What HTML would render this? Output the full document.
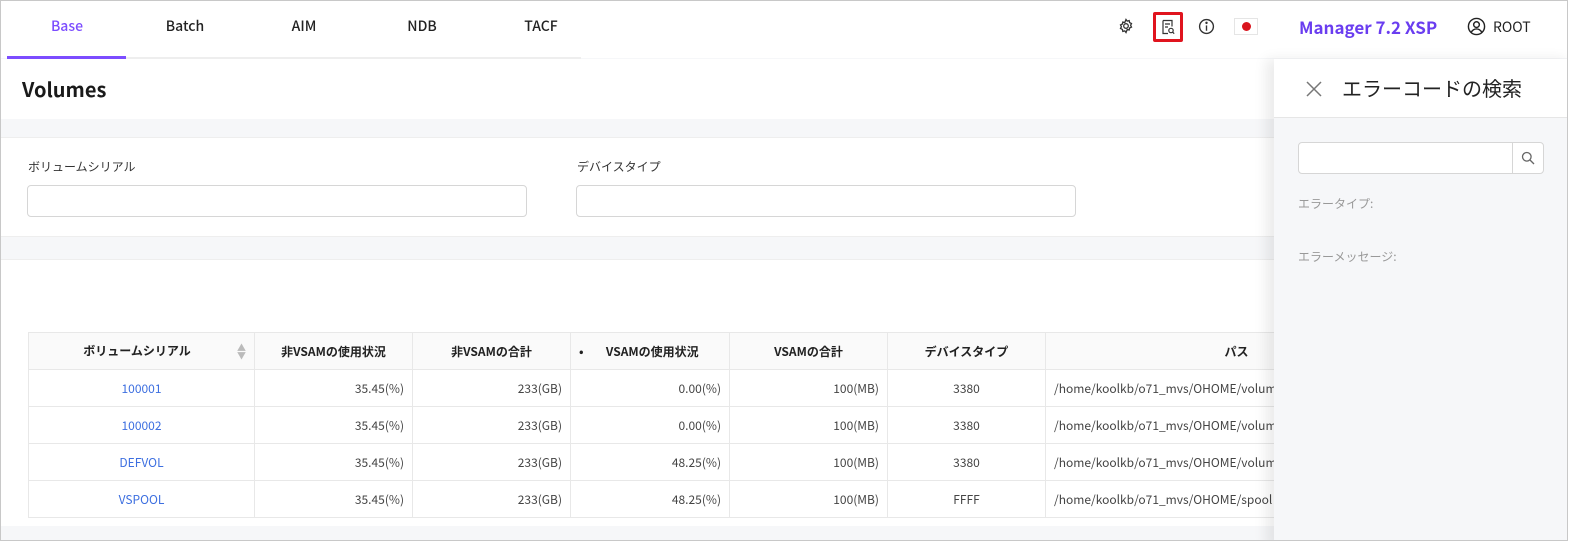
<!DOCTYPE html>
<html><head><meta charset="utf-8"><style>
*{box-sizing:border-box;margin:0;padding:0}
body{width:1588px;height:548px;overflow:hidden;background:#fff;font-family:"Noto Sans CJK JP","Liberation Sans",sans-serif;color:#222;position:relative}
.frame{position:absolute;left:0;top:0;width:1568px;height:541px;border:1px solid #c8c8c8;overflow:hidden;background:#f6f7f9}
.abs{position:absolute}
.tab{position:absolute;top:15px;width:118px;text-align:center;font-size:14px;font-weight:500;color:#222}
table{border-collapse:collapse;font-size:12px}
td,th{border:1px solid #e8e8e8;height:37px;padding:0 8px}
th{background:#fafafa;font-weight:bold;font-size:12px;color:#222}
td{color:#444}
.r{text-align:right}.c{text-align:center}
a{color:#3d6fe0;text-decoration:none}
.inp{position:absolute;height:32px;background:#fff;border:1px solid #d6d6d6;border-radius:4px}
.lbl{position:absolute;font-size:12px;color:#333}
</style></head><body>
<div class="frame">
 <div class="abs" style="left:0;top:0;width:1568px;height:57px;background:#fff"></div>
 <div class="abs" style="left:6px;top:56px;width:574px;height:2px;background:#eee"></div>
 <div class="abs" style="left:6px;top:55px;width:119px;height:3px;background:#7c4dff"></div>
 <div class="tab" style="left:7px;color:#7c4dff">Base</div>
 <div class="tab" style="left:125px">Batch</div>
 <div class="tab" style="left:244px">AIM</div>
 <div class="tab" style="left:362px">NDB</div>
 <div class="tab" style="left:481px">TACF</div>
 <svg class="abs" style="left:1117px;top:17px" width="16" height="16" viewBox="0 0 16 16" fill="none" stroke="#333" stroke-width="1.3"><circle cx="8" cy="8" r="2.3"/><path d="M8 1.5l1.2 1.6 2-.5.4 2 1.9.9-.9 1.8.9 1.8-1.9.9-.4 2-2-.5L8 14.5l-1.2-1.6-2 .5-.4-2-1.9-.9.9-1.8-.9-1.8 1.9-.9.4-2 2 .5z"/></svg>
 <div class="abs" style="left:1152px;top:11px;width:30px;height:30px;border:3px solid #e0141e;border-radius:2px"></div>
 <svg class="abs" style="left:1159px;top:18px" width="16" height="16" viewBox="0 0 16 16" fill="none" stroke="#333" stroke-width="1.2"><path d="M3 1.5h9v6M3 1.5v13h5"/><path d="M5 5h5M5 8h3"/><circle cx="11" cy="11.5" r="2.2"/><path d="M12.6 13.1l1.6 1.6"/></svg>
 <svg class="abs" style="left:1197px;top:17px" width="17" height="17" viewBox="0 0 16 16" fill="none" stroke="#333" stroke-width="1.3"><circle cx="8" cy="8" r="6.5"/><path d="M8 7v5"/><circle cx="8" cy="4.6" r=".5" fill="#333"/></svg>
 <div class="abs" style="left:1233px;top:17px;width:24px;height:17px;background:#fff;border:1px solid #e5e5e5"><div style="position:absolute;left:7px;top:3px;width:9px;height:9px;border-radius:50%;background:#d9141d"></div></div>
 <div class="abs" style="left:1298px;top:13px;font-size:17px;font-weight:bold;color:#6a3df0">Manager 7.2 XSP</div>
 <svg class="abs" style="left:1466px;top:16px" width="19" height="19" viewBox="0 0 20 20" fill="none" stroke="#222" stroke-width="1.5"><circle cx="10" cy="10" r="8.5"/><circle cx="10" cy="8" r="3"/><path d="M4.5 16c1.5-2.5 3.3-3.4 5.5-3.4s4 .9 5.5 3.4"/></svg>
 <div class="abs" style="left:1492px;top:16px;font-size:14px;color:#222">ROOT</div>

 <div class="abs" style="left:0;top:58px;width:1568px;height:60px;background:#fff"></div>
 <div class="abs" style="left:21px;top:73px;font-size:20px;font-weight:bold;color:#1a1a1a">Volumes</div>

 <div class="abs" style="left:0;top:136px;width:1568px;height:100px;background:#fff;border-top:1px solid #eee;border-bottom:1px solid #eee"></div>
 <div class="lbl" style="left:27px;top:157px">ボリュームシリアル</div>
 <div class="inp" style="left:26px;top:184px;width:500px"></div>
 <div class="lbl" style="left:576px;top:157px">デバイスタイプ</div>
 <div class="inp" style="left:575px;top:184px;width:500px"></div>

 <div class="abs" style="left:0;top:258px;width:1568px;height:267px;background:#fff;border-top:1px solid #eee"></div>
 <table class="abs" style="left:27px;top:331px;width:1400px;table-layout:fixed">
  <colgroup><col style="width:226px"><col style="width:158px"><col style="width:158px"><col style="width:159px"><col style="width:158px"><col style="width:158px"><col></colgroup>
  <tr><th>ボリュームシリアル<span style="float:right;color:#bbb;font-size:9px;line-height:8px;margin-top:2px">▲<br>▼</span></th><th>非VSAMの使用状況</th><th>非VSAMの合計</th><th><span style="float:left">•</span>VSAMの使用状況</th><th>VSAMの合計</th><th>デバイスタイプ</th><th>パス</th></tr>
  <tr><td class="c"><a>100001</a></td><td class="r">35.45(%)</td><td class="r">233(GB)</td><td class="r">0.00(%)</td><td class="r">100(MB)</td><td class="c">3380</td><td>/home/koolkb/o71_mvs/OHOME/volume</td></tr>
  <tr><td class="c"><a>100002</a></td><td class="r">35.45(%)</td><td class="r">233(GB)</td><td class="r">0.00(%)</td><td class="r">100(MB)</td><td class="c">3380</td><td>/home/koolkb/o71_mvs/OHOME/volume</td></tr>
  <tr><td class="c"><a>DEFVOL</a></td><td class="r">35.45(%)</td><td class="r">233(GB)</td><td class="r">48.25(%)</td><td class="r">100(MB)</td><td class="c">3380</td><td>/home/koolkb/o71_mvs/OHOME/volume</td></tr>
  <tr><td class="c"><a>VSPOOL</a></td><td class="r">35.45(%)</td><td class="r">233(GB)</td><td class="r">48.25(%)</td><td class="r">100(MB)</td><td class="c">FFFF</td><td>/home/koolkb/o71_mvs/OHOME/spool</td></tr>
 </table>

 <div class="abs" style="left:1273px;top:58px;width:300px;height:490px;background:#f6f7f9;box-shadow:-8px 0 12px rgba(0,0,0,.08)">
  <div style="position:absolute;left:0;top:0;width:300px;height:59px;background:#fff;border-bottom:1px solid #e6e6e6"></div>
  <svg style="position:absolute;left:32px;top:22px" width="16" height="16" viewBox="0 0 16 16" stroke="#777" stroke-width="1.5"><path d="M1 1l14 14M15 1L1 15"/></svg>
  <div style="position:absolute;left:68px;top:14px;font-size:20px;color:#222">エラーコードの検索</div>
  <div style="position:absolute;left:24px;top:83px;width:246px;height:32px;background:#fff;border:1px solid #d6d6d6;border-radius:4px"><div style="position:absolute;right:0;top:0;width:31px;height:30px;border-left:1px solid #d6d6d6"></div>
   <svg style="position:absolute;right:8px;top:8px" width="14" height="14" viewBox="0 0 14 14" fill="none" stroke="#666" stroke-width="1.3"><circle cx="5.8" cy="5.8" r="4.3"/><path d="M9 9l4 4"/></svg></div>
  <div style="position:absolute;left:24px;top:136px;font-size:12px;color:#999">エラータイプ:</div>
  <div style="position:absolute;left:24px;top:189px;font-size:12px;color:#999">エラーメッセージ:</div>
 </div>
</div>
</body></html>
